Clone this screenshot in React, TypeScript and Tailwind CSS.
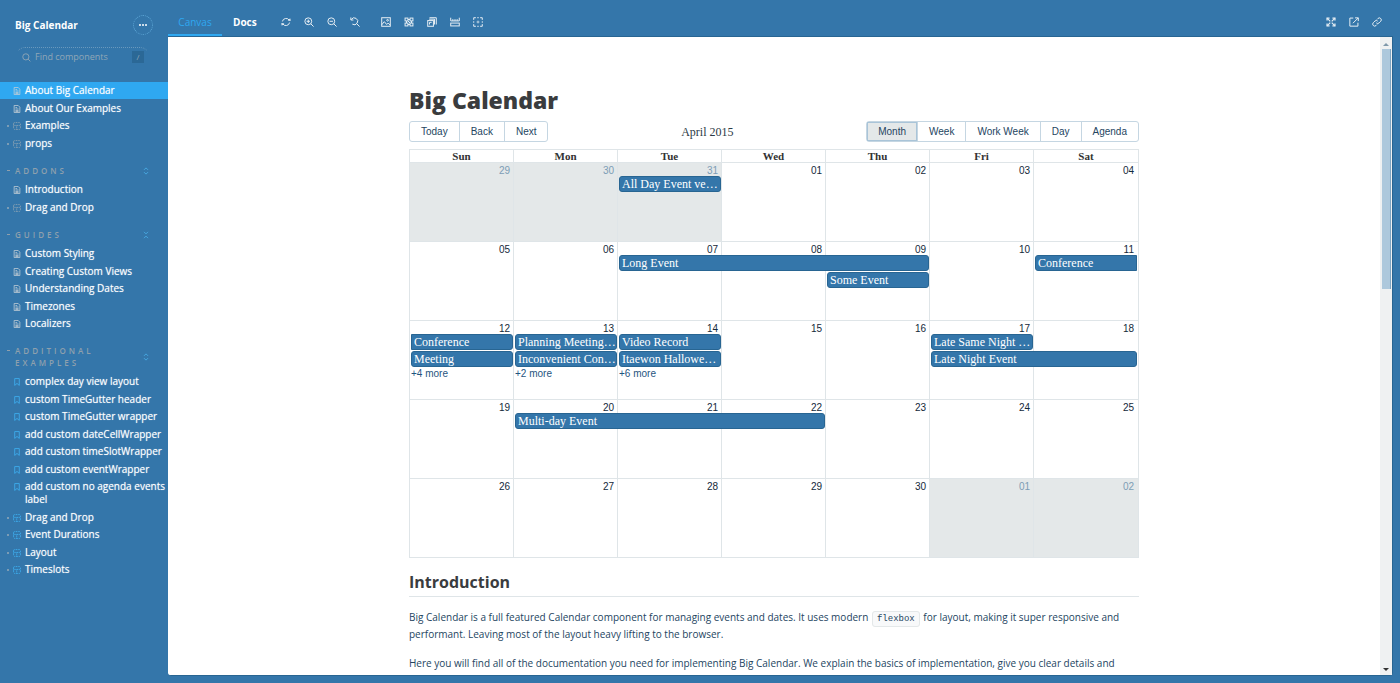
import type { ReactNode } from 'react';

function Svg({ children, className = 'size-[10px]', width = 1.4 }: { children: ReactNode; className?: string; width?: number }) {
  return (
    <svg viewBox="0 0 14 14" fill="none" stroke="currentColor" strokeWidth={width} className={`shrink-0 ${className}`} aria-hidden="true">
      {children}
    </svg>
  );
}

const icons = {
  sync: (
    <>
      <path d="M2 6.2A5.2 5.2 0 0 1 11.6 4.6M12 7.8A5.2 5.2 0 0 1 2.4 9.4" />
      <path d="M9.4 5.4h4.4l-1-3.6zM4.6 8.6H.2l1 3.6z" fill="currentColor" stroke="none" />
    </>
  ),
  zoomIn: (
    <>
      <circle cx="6" cy="6" r="4.8" />
      <path d="M9.5 9.5L13.4 13.4M6 3.6v4.8M3.6 6h4.8" />
    </>
  ),
  zoomOut: (
    <>
      <circle cx="6" cy="6" r="4.8" />
      <path d="M9.5 9.5L13.4 13.4M3.6 6h4.8" />
    </>
  ),
  zoomReset: (
    <>
      <path d="M1.8 3.6A4.8 4.8 0 1 1 3.3 10M9.5 9.5L13.4 13.4" />
      <path d="M1.2.6v3.6h3.6" />
    </>
  ),
  photo: (
    <>
      <rect x="1" y="1" width="12" height="12" />
      <circle cx="9.2" cy="4.6" r="1.2" />
      <path d="M1 11l3.6-4.5L8 10.5l2-2 3 3" />
    </>
  ),
  grid: (
    <>
      <rect x="1.5" y="1.5" width="4" height="4" />
      <rect x="8.5" y="1.5" width="4" height="4" />
      <rect x="1.5" y="8.5" width="4" height="4" />
      <rect x="8.5" y="8.5" width="4" height="4" />
      <path d="M5.5 3.5h3M5.5 10.5h3M3.5 5.5v3M10.5 5.5v3M5.5 5.5l3 3" />
    </>
  ),
  viewport: (
    <>
      <path d="M3.5 1h9.500v9.500" />
      <rect x="1" y="5" width="8" height="8" />
      <path d="M3 3h7.500v7.500M3.500 10.500v-3h3" />
    </>
  ),
  measure: (
    <>
      <path d="M1 1v4.500h12V1M4 3v2.500M7 3v2.500M10 3v2.500" />
      <rect x="1" y="8.5" width="12" height="4" />
    </>
  ),
  outline: (
    <>
      <path d="M1 4V1h3M10 1h3v3M13 10v3h-3M4 13H1v-3M6 1h2M6 13h2M1 6v2M13 6v2" />
      <path d="M7 5v4M5 7h4" strokeWidth="1" />
    </>
  ),
  expand: (
    <>
      <path d="M1.500 5V1.500H5M9 1.500h3.500V5M12.500 9v3.500H9M5 12.500H1.500V9" strokeWidth="1.8" />
      <path d="M1.500 1.500L6 6M12.500 1.500L8 6M12.500 12.500L8 8M1.500 12.500L6 8" strokeWidth="1.6" />
    </>
  ),
  share: (
    <>
      <path d="M6 1.500H1.200v11.300h11.300V8" />
      <path d="M8.500 1.200h4.500v4.500M13 1.200L5.500 8.700" />
    </>
  ),
  link: (
    <>
      <path d="M6 8.200a2.700 2.700 0 0 0 3.900.1l2.300-2.300a2.700 2.700 0 0 0-3.900-3.900L7 3.400" />
      <path d="M8 5.800a2.700 2.700 0 0 0-3.900-.1L1.800 8a2.700 2.700 0 0 0 3.900 3.900L7 10.600" />
    </>
  ),
  search: (
    <>
      <circle cx="6" cy="6" r="4.8" />
      <path d="M9.500 9.500L13 13" />
    </>
  ),
  doc: (
    <>
      <path d="M2 .8h7l3 3v9.400H2z" />
      <path d="M4.300 4.500h3M4.300 7h5.400M4.300 9.500h5.400M4.300 11.300h5.400" />
    </>
  ),
  bookmark: <path d="M3 1h8v12L7 9.500 3 13z" />,
  component: (
    <>
      <path d="M1 3a2 2 0 0 1 2-2h8a2 2 0 0 1 2 2v8a2 2 0 0 1-2 2H3a2 2 0 0 1-2-2z" strokeDasharray="3 1.5" />
      <path d="M1 6h12M6.500 6v7" strokeDasharray="2 1" />
    </>
  ),
  expandAll: <path d="M3.500 5L7 1.500 10.500 5M3.500 9L7 12.500 10.500 9" />,
  collapseAll: <path d="M3.500 1.500L7 5l3.500-3.500M3.500 12.500L7 9l3.500 3.500" />,
};

type Kind = 'doc' | 'story' | 'group' | 'component';
type Entry = [Kind, string];

function Entries({ items, active }: { items: Entry[]; active?: string }) {
  return (
    <ul>
      {items.map(([kind, label]) => (
        <li key={label} className="group/row">
          <a
            href="#"
            aria-current={label === active ? 'page' : undefined}
            className="flex items-start pt-[2px] pb-[2px] pl-[7px] text-[10px] leading-[13px] text-white [text-shadow:0_0_1px_#ffffff99] group-even/row:pt-[3px] aria-[current=page]:bg-[#2fa8f1]"
          >
            <span className="flex h-[13px] w-[6px] shrink-0 items-center">
              {(kind === 'group' || kind === 'component') && <span className="size-[2px] bg-[#7b9cb5]" />}
            </span>
            {kind === 'story' ? (
              <Svg className="mt-[3px] mr-1 size-2 text-[#3fb2f5]">{icons.bookmark}</Svg>
            ) : kind === 'component' ? (
              <Svg className="mt-[3px] mr-1 size-2 text-[#3fb2f5]">{icons.component}</Svg>
            ) : kind === 'group' ? (
              <Svg className="mt-[3px] mr-1 size-2 text-[#8fa5b5]">{icons.component}</Svg>
            ) : (
              <Svg className="mt-[3px] mr-1 size-2 text-[#c3ced6]">{icons.doc}</Svg>
            )}
            <span>{label}</span>
          </a>
        </li>
      ))}
    </ul>
  );
}

function Section({ title, open, items }: { title: string; open?: boolean; items: Entry[] }) {
  return (
    <section>
      <div className="mt-[13px] mb-1 flex items-center pr-[18px] pl-[7px] text-[#8fa0ad]">
        <button type="button" className="flex flex-1 items-start text-left text-[8px] leading-[12px] font-semibold tracking-[3px] uppercase">
          <span className="mt-[5px] mr-[5px] h-px w-[3px] shrink-0 bg-[#8fa0ad]" />
          <span>{title}</span>
        </button>
        <button type="button" aria-label={`Toggle ${title}`} className="text-[#4db4ee]">
          <Svg className="size-2">{open ? icons.collapseAll : icons.expandAll}</Svg>
        </button>
      </div>
      <Entries items={items} />
    </section>
  );
}

function Sidebar() {
  return (
    <nav className="w-[168px] shrink-0">
      <div className="flex items-center justify-between pt-[15px] pr-[15px] pl-[15px]">
        <a href="#" className="text-[10px] leading-5 font-bold text-white">
          Big Calendar
        </a>
        <button type="button" aria-label="Shortcuts" className="flex size-5 items-center justify-center gap-px rounded-full border border-dotted border-[#5fa9d8]">
          <span className="size-[2px] rounded-full bg-white" />
          <span className="size-[2px] rounded-full bg-white" />
          <span className="size-[2px] rounded-full bg-white" />
        </button>
      </div>
      <label className="mt-[12px] mr-[18px] mb-[15px] ml-[15px] flex h-5 items-center rounded-full border border-dotted border-transparent border-t-[#6a99bd] pr-[5px] pl-[6px] text-[#91a7b7]">
        <Svg className="size-[9px]">{icons.search}</Svg>
        <input aria-label="Find components" placeholder="Find components" className="ml-[4px] w-0 flex-1 bg-transparent text-[9px] leading-[14px] outline-none placeholder:text-[#91a7b7]" />
        <kbd className="flex size-3 items-center justify-center bg-[#2b6896] font-['Open_Sans',sans-serif] text-[8px]">/</kbd>
      </label>
      <Entries
        active="About Big Calendar"
        items={[
          ['doc', 'About Big Calendar'],
          ['doc', 'About Our Examples'],
          ['group', 'Examples'],
          ['group', 'props'],
        ]}
      />
      <Section
        title="Addons"
        items={[
          ['doc', 'Introduction'],
          ['group', 'Drag and Drop'],
        ]}
      />
      <Section
        title="Guides"
        open
        items={[
          ['doc', 'Custom Styling'],
          ['doc', 'Creating Custom Views'],
          ['doc', 'Understanding Dates'],
          ['doc', 'Timezones'],
          ['doc', 'Localizers'],
        ]}
      />
      <Section
        title="Additional Examples"
        items={[
          ['story', 'complex day view layout'],
          ['story', 'custom TimeGutter header'],
          ['story', 'custom TimeGutter wrapper'],
          ['story', 'add custom dateCellWrapper'],
          ['story', 'add custom timeSlotWrapper'],
          ['story', 'add custom eventWrapper'],
          ['story', 'add custom no agenda events label'],
          ['component', 'Drag and Drop'],
          ['component', 'Event Durations'],
          ['component', 'Layout'],
          ['component', 'Timeslots'],
        ]}
      />
    </nav>
  );
}

function Tool({ name, label }: { name: keyof typeof icons; label: string }) {
  return (
    <button type="button" aria-label={label} title={label} className="text-[#e6eef4]">
      <Svg>{icons[name]}</Svg>
    </button>
  );
}

function TopBar() {
  return (
    <header className="flex h-9 shrink-0 items-center pr-[11px]">
      <div role="tablist" className="flex h-full text-[10px]">
        <button type="button" role="tab" aria-selected="true" className="border-b-2 border-[#2fa8f1] px-[10px] pt-[10px] text-[#2fa8f1]">
          <span className="block w-[34px]">Canvas</span>
        </button>
        <button type="button" role="tab" aria-selected="false" className="px-[11px] pt-[10px] pb-[2px] font-bold text-white">
          Docs
        </button>
      </div>
      <div className="flex flex-1 items-center pt-[8px] pl-[13px]">
        <div className="flex gap-[13px]">
          <Tool name="sync" label="Remount component" />
          <Tool name="zoomIn" label="Zoom in" />
          <Tool name="zoomOut" label="Zoom out" />
          <Tool name="zoomReset" label="Reset zoom" />
        </div>
        <div className="ml-[21px] flex gap-[13px]">
          <Tool name="photo" label="Change background" />
          <Tool name="grid" label="Apply a grid" />
          <Tool name="viewport" label="Change viewport" />
          <Tool name="measure" label="Enable measure" />
          <Tool name="outline" label="Apply outlines" />
        </div>
        <div className="ml-auto flex gap-[13px]">
          <Tool name="expand" label="Go full screen" />
          <Tool name="share" label="Open canvas in new tab" />
          <Tool name="link" label="Copy canvas link" />
        </div>
      </div>
    </header>
  );
}

function ButtonGroup({ labels, active }: { labels: string[]; active?: string }) {
  return (
    <div className="flex h-[21px] divide-x divide-[#c5d6e2] rounded-[3px] border border-[#c5d6e2]">
      {labels.map((label) => (
        <button
          key={label}
          type="button"
          aria-pressed={label === active}
          className="px-[11px] text-[10px] leading-[19px] text-[#24455f] aria-pressed:bg-[#e4e8e9] aria-pressed:shadow-[inset_0_0_0_1px_#a9c4d8]"
        >
          {label}
        </button>
      ))}
    </div>
  );
}

type CalEvent = { title: string; place: string; shape?: string };
type Week = { days: string[]; off?: number[]; events: CalEvent[]; more?: { label: string; place: string }[] };

const weeks: Week[] = [
  {
    days: ['29', '30', '31', '01', '02', '03', '04'],
    off: [0, 1, 2],
    events: [{ title: 'All Day Event very long title', place: 'col-start-3 row-start-2' }],
  },
  {
    days: ['05', '06', '07', '08', '09', '10', '11'],
    events: [
      { title: 'Long Event', place: 'col-start-3 col-span-3 row-start-2' },
      { title: 'Some Event', place: 'col-start-5 row-start-3' },
      { title: 'Conference', place: 'col-start-7 row-start-2', shape: 'rounded-l-[3px]' },
    ],
  },
  {
    days: ['12', '13', '14', '15', '16', '17', '18'],
    events: [
      { title: 'Conference', place: 'col-start-1 row-start-2', shape: 'rounded-r-[3px]' },
      { title: 'Meeting', place: 'col-start-1 row-start-3' },
      { title: 'Planning Meeting with Paige', place: 'col-start-2 row-start-2' },
      { title: 'Inconvenient Conference Call', place: 'col-start-2 row-start-3' },
      { title: 'Video Record', place: 'col-start-3 row-start-2' },
      { title: 'Itaewon Halloween Meeting', place: 'col-start-3 row-start-3' },
      { title: 'Late Same Night Event', place: 'col-start-6 row-start-2' },
      { title: 'Late Night Event', place: 'col-start-6 col-span-2 row-start-3' },
    ],
    more: [
      { label: '+4 more', place: 'col-start-1 row-start-4' },
      { label: '+2 more', place: 'col-start-2 row-start-4' },
      { label: '+6 more', place: 'col-start-3 row-start-4' },
    ],
  },
  {
    days: ['19', '20', '21', '22', '23', '24', '25'],
    events: [{ title: 'Multi-day Event', place: 'col-start-2 col-span-3 row-start-2' }],
  },
  { days: ['26', '27', '28', '29', '30', '01', '02'], off: [5, 6], events: [] },
];

function WeekRow({ week }: { week: Week }) {
  const isOff = (i: number) => week.off?.includes(i);
  return (
    <div className="grid min-h-[79px] grid-cols-1 border-t border-[#dfe5e8]">
      <div className="col-start-1 row-start-1 grid grid-cols-7 divide-x divide-[#dfe5e8]">
        {week.days.map((day, i) => (
          <div key={day} className={isOff(i) ? 'bg-[#e4e8e9]' : ''} />
        ))}
      </div>
      <div className="col-start-1 row-start-1 grid grid-cols-7 content-start gap-y-px">
        {week.days.map((day, i) => (
          <button
            key={day}
            type="button"
            className={`row-start-1 h-3 pt-[3px] pr-1 text-right text-[10px] leading-[9px] ${isOff(i) ? 'text-[#7d9db5]' : 'text-[#14293a]'}`}
          >
            {day}
          </button>
        ))}
        {week.events.map((event) => (
          <div key={event.title} className={`min-w-0 pr-px pl-px ${event.place}`}>
            <button
              type="button"
              title={event.title}
              className={`block h-4 w-full truncate border border-[#286592] bg-[#3476aa] pl-[2px] text-left font-['Liberation_Serif',serif] text-[12px] leading-[14px] text-white ${event.shape ?? 'rounded-[3px]'}`}
            >
              {event.title}
            </button>
          </div>
        ))}
        {week.more?.map((m) => (
          <button key={m.label} type="button" className={`pl-px text-left text-[10px] leading-[12px] text-[#1f5580] ${m.place}`}>
            {m.label}
          </button>
        ))}
      </div>
    </div>
  );
}

function Calendar() {
  return (
    <div className="font-['Liberation_Sans',sans-serif]">
      <div className="mb-[7px] flex items-center justify-between">
        <ButtonGroup labels={['Today', 'Back', 'Next']} />
        <span className="font-['Liberation_Serif',serif] text-[12px] leading-[14px] text-[#2c3a45]">April 2015</span>
        <ButtonGroup labels={['Month', 'Week', 'Work Week', 'Day', 'Agenda']} active="Month" />
      </div>
      <div className="border border-[#dfe5e8]">
        <div className="grid grid-cols-7 divide-x divide-[#dfe5e8] text-center font-['Liberation_Serif',serif] text-[11px] leading-[12px] font-bold text-[#333]">
          {['Sun', 'Mon', 'Tue', 'Wed', 'Thu', 'Fri', 'Sat'].map((d) => (
            <div key={d}>{d}</div>
          ))}
        </div>
        {weeks.map((week) => (
          <WeekRow key={week.days.join()} week={week} />
        ))}
      </div>
    </div>
  );
}

function Scrollbar() {
  return (
    <div className="flex w-3 shrink-0 flex-col items-center bg-[#eff1f2] py-1">
      <span className="mt-[2px] border-x-[3px] border-b-[3px] border-x-transparent border-b-[#7f98aa]" />
      <span className="mt-[3px] h-[240px] w-[9px] border-r border-[#7fa5c2] bg-[#adc8dc]" />
      <span className="mt-auto border-x-[3px] border-t-[3px] border-x-transparent border-t-[#333]" />
    </div>
  );
}

export default function App() {
  return (
    <div className="flex h-screen overflow-hidden bg-[#3476aa] font-['Open_Sans',sans-serif]">
      <Sidebar />
      <main className="flex min-w-0 flex-1 flex-col pr-[7px] pb-[7px]">
        <TopBar />
        <div className="flex min-h-0 flex-1 rounded-b-[3px] border-t border-r border-b border-[#286592] bg-white">
          <div className="flex-1 overflow-hidden px-5 pt-[50px]">
            <article className="mx-auto max-w-[730px] text-[#24455f]">
              <h1 className="mb-2 text-[23px] leading-[26px] font-extrabold text-[#3a3c3e]">Big Calendar</h1>
              <Calendar />
              <h2 className="mt-[12px] mb-[12px] border-b border-[#dfe5e8] pb-[2px] text-[16px] leading-6 font-bold text-[#3a3c3e]">Introduction</h2>
              <p className="mb-[12px] text-[10px] leading-[17px]">
                Big Calendar is a full featured Calendar component for managing events and dates. It uses modern{' '}
                <code className="mx-px rounded-[3px] border border-[#e4e8e9] bg-[#f8f9fa] px-1 py-[2px] font-['Liberation_Mono',monospace] text-[9px] leading-none">flexbox</code> for
                layout, making it super responsive and performant. Leaving most of the layout heavy lifting to the browser.
              </p>
              <p className="text-[10px] leading-[17px]">
                Here you will find all of the documentation you need for implementing Big Calendar. We explain the basics of implementation, give you clear details and
              </p>
            </article>
          </div>
          <Scrollbar />
        </div>
      </main>
    </div>
  );
}
